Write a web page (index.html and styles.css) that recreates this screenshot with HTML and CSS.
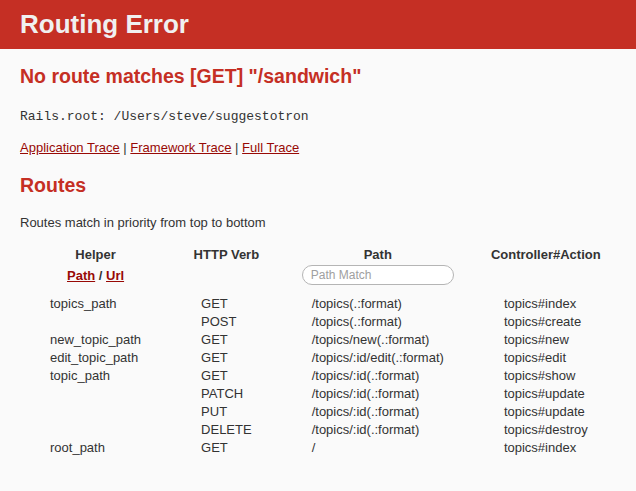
FILE: index.html
```
<!DOCTYPE html>
<html>
<head>
<meta charset="utf-8">
<title>Routing Error</title>
<link rel="stylesheet" href="styles.css">
</head>
<body>
<header class="top">
  <h1 class="title">Routing Error</h1>
</header>
<div class="container">
  <h2 class="error">No route matches [GET] "/sandwich"</h2>
  <p class="root"><code class="mono">Rails.root: /Users/steve/suggestotron</code></p>
  <p class="traces"><a class="lnk" href="#">Application Trace</a> | <a class="lnk" href="#">Framework Trace</a> | <a class="lnk" href="#">Full Trace</a></p>
  <h2 class="routes">Routes</h2>
  <p class="note">Routes match in priority from top to bottom</p>
  <table class="route-table">
    <thead>
      <tr class="head">
        <th>Helper</th><th>HTTP Verb</th><th>Path</th><th>Controller#Action</th>
      </tr>
      <tr class="bottom">
        <th><a class="lnk" href="#">Path</a> / <a class="lnk" href="#">Url</a></th>
        <th></th>
        <th><input class="search" type="search" placeholder="Path Match"></th>
        <th></th>
      </tr>
    </thead>
    <tbody>
      <tr><td>topics_path</td><td>GET</td><td>/topics(.:format)</td><td>topics#index</td></tr>
      <tr><td></td><td>POST</td><td>/topics(.:format)</td><td>topics#create</td></tr>
      <tr><td>new_topic_path</td><td>GET</td><td>/topics/new(.:format)</td><td>topics#new</td></tr>
      <tr><td>edit_topic_path</td><td>GET</td><td>/topics/:id/edit(.:format)</td><td>topics#edit</td></tr>
      <tr><td>topic_path</td><td>GET</td><td>/topics/:id(.:format)</td><td>topics#show</td></tr>
      <tr><td></td><td>PATCH</td><td>/topics/:id(.:format)</td><td>topics#update</td></tr>
      <tr><td></td><td>PUT</td><td>/topics/:id(.:format)</td><td>topics#update</td></tr>
      <tr><td></td><td>DELETE</td><td>/topics/:id(.:format)</td><td>topics#destroy</td></tr>
      <tr><td>root_path</td><td>GET</td><td>/</td><td>topics#index</td></tr>
    </tbody>
  </table>
</div>
</body>
</html>
```
FILE: styles.css
```
html, body {
  margin: 0;
  background: #FAFAFA;
}
body {
  color: #333;
  font-family: "Liberation Sans", Arial, sans-serif;
  font-size: 13px;
  line-height: 18px;
}
.top {
  background: #C52F24;
  color: #F0F0F0;
  padding: 10px 20px;
  height: 29px;
}
.title {
  margin: 0;
  font-size: 26px;
  line-height: 29px;
  font-weight: bold;
}
.container {
  padding: 0 20px;
}
.error, .routes {
  color: #C52F24;
  font-size: 19.5px;
  line-height: 25px;
  margin: 15px 0 0;
}
.routes {
  margin-top: 16px;
}
.root {
  margin: 18px 0 0;
}
.mono {
  font-family: "Liberation Mono", "Courier New", monospace;
  font-size: 13px;
}
.traces {
  margin: 13px 0 0;
}
.lnk {
  color: #980905;
}
.note {
  margin: 16px 0 0;
}
.route-table {
  margin-top: 13px;
  border-collapse: collapse;
}
.route-table th {
  padding: 1px;
  font-weight: bold;
  text-align: center;
}
.route-table td {
  padding: 0 30px;
  text-align: left;
}
.route-table .bottom th {
  padding-top: 0;
  padding-bottom: 10px;
  line-height: 15px;
}
.search {
  box-sizing: border-box;
  width: 152px;
  height: 20px;
  margin: 0;
  padding: 0 8px;
  border: 1px solid #b5b5b5;
  border-radius: 10px;
  background: #fff;
  font-family: "Liberation Sans", Arial, sans-serif;
  font-size: 12px;
  color: #333;
  outline: none;
  vertical-align: middle;
  -webkit-appearance: none;
  appearance: none;
}
.search::placeholder {
  color: #a0a0a0;
}
```
